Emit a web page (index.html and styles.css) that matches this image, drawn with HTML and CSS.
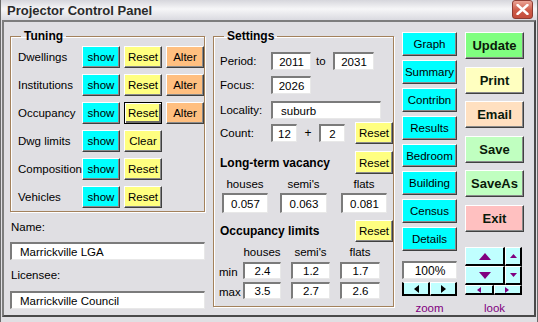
FILE: index.html
```html
<!DOCTYPE html>
<html lang="en">
<head>
  <meta charset="UTF-8" />
  <title>Projector Control Panel</title>
  <link rel="stylesheet" href="styles.css">
</head>
<body>

<div class="window">
  <div class="titlebar">
    <span class="title">Projector Control Panel</span>
    <button class="close" aria-label="Close">
      <svg width="13" height="11" viewBox="0 0 13 11"><path d="M1.5 1 L11.5 10 M11.5 1 L1.5 10" stroke="#fff" stroke-width="2.4" stroke-linecap="round"/></svg>
    </button>
  </div>

  <div class="client">
    <!-- left: tuning + names -->
    <div class="col-left">
      <fieldset class="group tuning">
        <legend>Tuning</legend>
        <div class="trow"><span class="tlabel">Dwellings</span><button class="btn cyan">show</button><button class="btn yellow">Reset</button><button class="btn orange">Alter</button></div>
        <div class="trow"><span class="tlabel">Institutions</span><button class="btn cyan">show</button><button class="btn yellow">Reset</button><button class="btn orange">Alter</button></div>
        <div class="trow"><span class="tlabel">Occupancy</span><button class="btn cyan">show</button><button class="btn yellow focused">Reset</button><button class="btn orange">Alter</button></div>
        <div class="trow"><span class="tlabel">Dwg limits</span><button class="btn cyan">show</button><button class="btn yellow">Clear</button></div>
        <div class="trow"><span class="tlabel">Composition</span><button class="btn cyan">show</button><button class="btn yellow">Reset</button></div>
        <div class="trow"><span class="tlabel">Vehicles</span><button class="btn cyan">show</button><button class="btn yellow">Reset</button></div>
      </fieldset>

      <div class="field-label">Name:</div>
      <input class="box text wide" value="Marrickville LGA" readonly>
      <div class="field-label">Licensee:</div>
      <input class="box text wide last" value="Marrickville Council" readonly>
    </div>

    <!-- middle: settings -->
    <fieldset class="group settings">
      <legend>Settings</legend>
      <div class="srow period">
        <span class="slabel">Period:</span>
        <input class="box w40" value="2011" readonly>
        <span class="to">to</span>
        <input class="box w41" value="2031" readonly>
      </div>
      <div class="srow focus">
        <span class="slabel">Focus:</span>
        <input class="box w40" value="2026" readonly>
      </div>
      <div class="srow locality">
        <span class="slabel">Locality:</span>
        <input class="box w110 left" value="suburb" readonly>
      </div>
      <div class="srow count">
        <span class="slabel">Count:</span>
        <input class="box w26" value="12" readonly>
        <span class="plus">+</span>
        <input class="box w26" value="2" readonly>
        <button class="btn yellow push">Reset</button>
      </div>

      <div class="srow heading vacancy">
        <span class="sub">Long-term vacancy</span>
        <button class="btn yellow push">Reset</button>
      </div>
      <div class="srow cols vac-cols">
        <span class="c46">houses</span><span class="c47">semi's</span><span class="c46">flats</span>
      </div>
      <div class="srow vac-vals">
        <input class="box c46 tall" value="0.057" readonly>
        <input class="box c47 tall" value="0.063" readonly>
        <input class="box c46 tall" value="0.081" readonly>
      </div>

      <div class="srow heading limits">
        <span class="sub">Occupancy limits</span>
        <button class="btn yellow push">Reset</button>
      </div>
      <div class="srow cols lim-cols">
        <span class="mm"></span><span class="c38">houses</span><span class="c39">semi's</span><span class="c40">flats</span>
      </div>
      <div class="srow lim-row">
        <span class="mm">min</span>
        <input class="box c38" value="2.4" readonly>
        <input class="box c39" value="1.2" readonly>
        <input class="box c40" value="1.7" readonly>
      </div>
      <div class="srow lim-row">
        <span class="mm">max</span>
        <input class="box c38" value="3.5" readonly>
        <input class="box c39" value="2.7" readonly>
        <input class="box c40" value="2.6" readonly>
      </div>
    </fieldset>

    <!-- right: view buttons + zoom -->
    <div class="col-nav">
      <button class="btn nav">Graph</button>
      <button class="btn nav">Summary</button>
      <button class="btn nav">Contribn</button>
      <button class="btn nav">Results</button>
      <button class="btn nav">Bedroom</button>
      <button class="btn nav">Building</button>
      <button class="btn nav">Census</button>
      <button class="btn nav">Details</button>

      <input class="box zoom-box" value="100%" readonly>
      <div class="spin">
        <button class="cell"><svg width="5" height="8" viewBox="0 0 5 8"><path d="M5 0 L0 4 L5 8 Z" fill="#000"/></svg></button>
        <button class="cell"><svg width="5" height="8" viewBox="0 0 5 8"><path d="M0 0 L5 4 L0 8 Z" fill="#000"/></svg></button>
      </div>
      <div class="caption">zoom</div>
    </div>

    <!-- far right: actions + look -->
    <div class="col-actions">
      <button class="btn act update">Update</button>
      <button class="btn act print">Print</button>
      <button class="btn act email">Email</button>
      <button class="btn act save">Save</button>
      <button class="btn act save">SaveAs</button>
      <button class="btn act exit">Exit</button>

      <div class="look">
        <div class="look-grid">
          <button class="cell"><svg width="12" height="7" viewBox="0 0 12 7"><path d="M0 7 L6 0 L12 7 Z" fill="#800080"/></svg></button>
          <button class="cell"><svg width="7" height="4" viewBox="0 0 7 4"><path d="M0 4 L3.5 0 L7 4 Z" fill="#800080"/></svg></button>
          <button class="cell"><svg width="12" height="7" viewBox="0 0 12 7"><path d="M0 0 L6 7 L12 0 Z" fill="#800080"/></svg></button>
          <button class="cell"><svg width="7" height="4" viewBox="0 0 7 4"><path d="M0 0 L3.5 4 L7 0 Z" fill="#800080"/></svg></button>
        </div>
        <div class="look-row">
          <button class="cell"><svg width="4" height="6" viewBox="0 0 4 6"><path d="M4 0 L0 3 L4 6 Z" fill="#800080"/></svg></button>
          <button class="cell"><svg width="4" height="6" viewBox="0 0 4 6"><path d="M0 0 L4 3 L0 6 Z" fill="#800080"/></svg></button>
        </div>
      </div>
      <div class="caption">look</div>
    </div>
  </div>
</div>

</body>
</html>
```

FILE: styles.css
```css
* { margin: 0; padding: 0; box-sizing: border-box; }

html, body {
  width: 538px;
  height: 322px;
  overflow: hidden;
}

body {
  background: #e0dfe3;
  font-family: "Liberation Sans", Arial, sans-serif;
  font-size: 11px;
  color: #000;
}

.window {
  width: 538px;
  height: 322px;
  border-left: 1px solid #6a6a6a;
  border-right: 1px solid #6a6a6a;
}

/* title bar */
.titlebar {
  height: 20px;
  display: flex;
  align-items: center;
  justify-content: space-between;
  padding: 0 4px 0 6px;
  background: linear-gradient(#d6d6dc, #f6f6f8 45%, #dadae0);
}

.title {
  font-size: 13px;
  font-weight: bold;
  color: #2a2a2a;
}

.close {
  width: 21px;
  height: 19px;
  margin-top: -1px;
  border: 1px solid #8c3b32;
  border-radius: 3px;
  background: linear-gradient(#eba496, #cd5a48 55%, #c44d3c);
  display: flex;
  align-items: center;
  justify-content: center;
}

/* main area */
.client {
  height: 297px;
  margin: 0 1px;
  border: 2px solid;
  border-color: #7d7d7d #4a4a4a #4a4a4a #7d7d7d;
  display: flex;
  gap: 8px;
  padding-left: 6px;
}

fieldset.group {
  border: 1px solid #a3815c;
  box-shadow: inset 1px 1px 0 #fff, 1px 1px 0 #fff;
  padding: 1px 0 3px 6px;
}

fieldset.group legend {
  font-size: 12px;
  font-weight: bold;
  line-height: 15px;
  padding: 0 3px;
  margin-left: 4px;
}

/* buttons */
.btn {
  font-family: "Liberation Sans", Arial, sans-serif;
  font-size: 11.5px;
  color: #000;
  border: 1px solid;
  border-color: #fff #404040 #404040 #fff;
  box-shadow: inset -1px -1px 0 #8a8a8a;
  cursor: pointer;
}

.cyan { background: #00ffff; }
.yellow { background: #ffff80; }
.orange { background: #ffbf80; }

.btn.focused {
  outline: 1px solid #000;
  outline-offset: -1px;
  border-color: #000;
  box-shadow: inset 1px 1px 0 #fff, inset -2px -2px 0 #6a6a6a;
}

/* text boxes */
.box {
  height: 18px;
  font-family: "Liberation Sans", Arial, sans-serif;
  font-size: 11.5px;
  color: #000;
  background: #fff;
  border-style: solid;
  border-width: 2px 1px 1px 2px;
  border-color: #7b7b7b #e8e8e8 #e8e8e8 #7b7b7b;
  text-align: center;
  outline: none;
}

.box.left,
.box.text {
  text-align: left;
  padding-left: 8px;
}

/* tuning */
.col-left {
  width: 195px;
  padding-top: 7px;
  display: flex;
  flex-direction: column;
}

.tuning {
  height: 183px;
}

.trow {
  display: flex;
  align-items: center;
  gap: 4px;
  height: 22px;
  margin-top: 6px;
}

.trow:first-of-type { margin-top: 1px; }

.trow .btn {
  width: 38px;
  height: 22px;
}

.tlabel {
  width: 61px;
  font-size: 11.5px;
  padding-left: 1px;
}

.field-label {
  font-size: 11.5px;
  line-height: 14px;
  margin-top: 8px;
  padding-left: 1px;
}

.wide {
  width: 195px;
  margin-top: 8px;
}

.wide.last { margin-top: 9px; }

/* settings */
.settings {
  width: 181px;
  height: 278px;
  margin-top: 7px;
}

.srow {
  display: flex;
  align-items: center;
}

.slabel {
  width: 51px;
  font-size: 11.5px;
}

.w40 { width: 40px; }
.w41 { width: 41px; }
.w26 { width: 26px; }
.w110 { width: 110px; }

.to {
  width: 22px;
  padding-left: 5px;
  font-size: 11.5px;
}

.plus {
  width: 22px;
  text-align: center;
  font-size: 12px;
}

.push {
  margin-left: auto;
  width: 38px;
  height: 22px;
}

.period { margin-top: 7px; }
.focus { margin-top: 6px; }
.locality { margin-top: 7px; }
.count { margin-top: 3px; height: 22px; }

.sub {
  font-size: 12px;
  font-weight: bold;
}

.vacancy { margin-top: 7px; height: 23px; }
.vacancy .push { height: 23px; }
.limits { margin-top: 7px; height: 22px; }

.cols span {
  text-align: center;
  font-size: 11.5px;
  line-height: 13px;
}

.vac-cols { margin-top: 4px; padding-left: 2px; gap: 12px; }
.vac-cols .c47 { margin-right: 2px; }
.vac-vals { margin-top: 2px; padding-left: 2px; gap: 12px; }
.vac-vals .c47 { margin-right: 2px; }

.c46 { width: 46px; }
.c47 { width: 47px; }
.c38 { width: 38px; }
.c39 { width: 39px; }
.c40 { width: 40px; }

.box.tall { height: 20px; }

.lim-cols { margin-top: 4px; gap: 10px; }

.lim-row {
  margin-top: 3px;
  gap: 10px;
  align-items: flex-end;
}

.lim-row .box { height: 17px; }

.mm {
  width: 24px;
  margin-right: -10px;
  font-size: 11.5px;
  line-height: 13px;
  margin-left: -1px;
}

/* view buttons */
.col-nav {
  width: 55px;
  padding-top: 10px;
  display: flex;
  flex-direction: column;
  gap: 4px;
}

.nav {
  height: 24px;
  background: #00ffff;
}

.zoom-box {
  margin-top: 6px;
  width: 55px;
  font-size: 12px;
}

.spin {
  display: flex;
  margin-top: -1px;
  height: 14px;
}

.cell {
  flex: 1;
  display: flex;
  align-items: center;
  justify-content: center;
  background: #c0ffff;
  border-style: solid;
  border-width: 1px 2px 2px 1px;
  border-color: #fff #000 #000 #fff;
}

.spin .cell:first-child { border-left: 2px solid #000; }

.caption {
  color: #800080;
  font-size: 11.5px;
  text-align: center;
  line-height: 13px;
  margin-top: 2px;
}

/* action buttons */
.col-actions {
  width: 59px;
  padding-top: 10px;
  display: flex;
  flex-direction: column;
  gap: 7.6px;
}

.act {
  height: 27px;
  font-size: 13px;
  font-weight: bold;
  color: #0a1a0a;
}

.update { background: #80ff80; }
.print { background: #ffffc0; }
.email { background: #ffe0c0; }
.save { background: #c0ffc0; }
.exit { background: #ffc0c0; }

.look {
  margin-top: 8px;
  width: 57px;
  height: 48px;
  display: flex;
  flex-direction: column;
}

.look-grid {
  display: grid;
  grid-template-columns: 40px 17px;
  grid-template-rows: 19px 19px;
}

.look-row {
  display: flex;
  height: 10px;
}

.col-actions .caption { margin-top: -1px; }
```
